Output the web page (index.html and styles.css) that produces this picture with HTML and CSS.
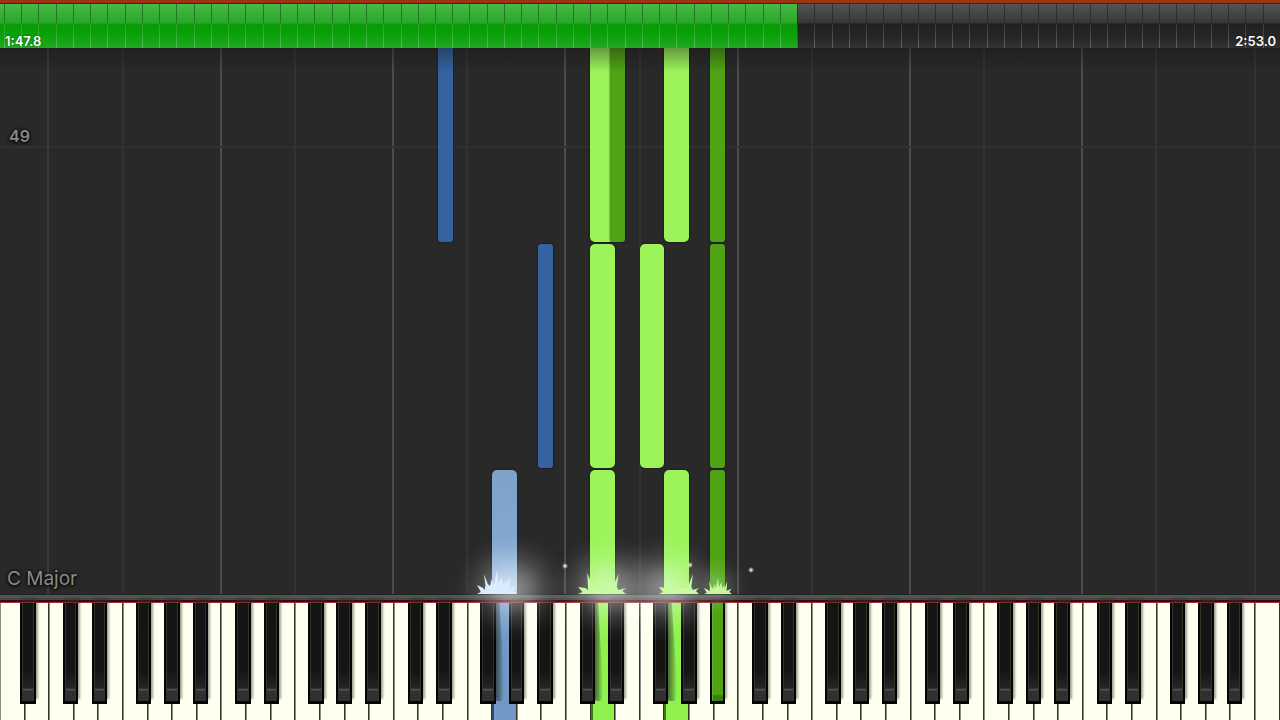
FILE: index.html
```html
<!DOCTYPE html>
<html lang="en">
<head>
<meta charset="utf-8">
<meta name="viewport" content="width=device-width, initial-scale=1">
<title>Piano roll</title>
<link rel="stylesheet" href="styles.css">
</head>
<body>
<main class="player">
  <div class="strip"></div>
  <section class="timeline" aria-label="Song position">
    <div class="elapsed"></div>
    <div class="ticks"></div>
    <div class="times"><span>1:47.8</span><span>2:53.0</span></div>
  </section>
  <section class="roll" aria-label="Falling notes">
    <div class="lines"></div>
    <div class="measure"><span class="measure-number">49</span></div>
    <div class="notes"></div>
    <div class="shade"></div>
    <div class="key-name">C Major</div>
  </section>
  <div class="ledge"></div>
  <section class="keyboard" aria-label="Keyboard">
    <div class="whites"></div>
    <div class="blacks"></div>
    <div class="effects"></div>
  </section>
</main>
<script src="piano.js"></script>
</body>
</html>
```

FILE: styles.css
```css
* {
  box-sizing: border-box;
}

body {
  margin: 0;
  background: #292929;
  font-family: Inter, "Liberation Sans", sans-serif;
}

.player {
  display: flex;
  flex-direction: column;
  height: 100vh;
  overflow: hidden;
}

.strip {
  height: 3px;
  flex: none;
  background: #9b3415;
}

/* Timeline */
.timeline {
  position: relative;
  display: flex;
  align-items: flex-end;
  flex: none;
  height: 45px;
  border-top: 1px solid #2a2a1a;
  background: linear-gradient(#555 0%, #363636 43%, #202020 45%, #252525 75%, #333 100%);
}

.elapsed {
  position: absolute;
  top: 0;
  bottom: 0;
  left: 0;
  width: 62.3%;
  background: linear-gradient(#48b848 0%, #28a828 43%, #0a9c0a 46%, #0aa00a 70%, #22a822 100%);
}

.ticks {
  position: absolute;
  inset: 0;
}

.tick {
  position: absolute;
  top: 0;
  bottom: 0;
  width: 1px;
  background: linear-gradient(rgba(0, 0, 0, 0.4) 0%, rgba(0, 0, 0, 0.25) 42%, rgba(255, 255, 255, 0.1) 46%, rgba(255, 255, 255, 0.25) 100%);
}

.times {
  position: relative;
  display: flex;
  justify-content: space-between;
  width: 100%;
  padding: 0 4px 0 5px;
  color: #fff;
  font-size: 13px;
  font-weight: 600;
  line-height: 14px;
  text-shadow: 0 0 2px rgba(0, 0, 0, 0.6);
}

/* Falling notes */
.roll {
  position: relative;
  flex: 1;
  min-height: 0;
  overflow: hidden;
  background: #292929;
}

.lines,
.notes {
  position: absolute;
  inset: 0;
}

.line {
  position: absolute;
  top: 0;
  bottom: 0;
  width: 2px;
  margin-left: -1px;
  background: #333;
}

.line.octave {
  background: #4c4c4c;
}

.line.edge {
  background: #3b3b3b;
}

.measure {
  position: absolute;
  top: 18%;
  left: 0;
  right: 0;
  height: 2px;
  background: #313131;
}

.measure-number {
  position: absolute;
  left: 9px;
  bottom: 2px;
  color: #868686;
  font-size: 16px;
  font-weight: 600;
  line-height: 20px;
  text-shadow: 0 0 4px #000, 0 1px 3px #000;
}

.note {
  position: absolute;
  width: 1.92%;
  border-radius: 5px;
  box-shadow: 0 0 2px rgba(0, 0, 0, 0.7);
}

.note.sharp {
  width: 1.17%;
  border-radius: 3px;
}

.note.open {
  border-top-left-radius: 0;
  border-top-right-radius: 0;
}

.note.landing {
  border-bottom-left-radius: 0;
  border-bottom-right-radius: 0;
}

.note.lime { background: #9cf45a; }
.note.green { background: #4fa314; }
.note.sky { background: linear-gradient(#7ea3c9 0%, #83a8cf 60%, #a8c6e8 100%); }
.note.blue { background: #3562a1; }

.shade {
  position: absolute;
  top: 0;
  left: 0;
  right: 0;
  height: 24px;
  background: linear-gradient(rgba(20, 20, 20, 0.4), rgba(20, 20, 20, 0));
}

.key-name {
  position: absolute;
  left: 7px;
  bottom: 3px;
  color: #8a8a8a;
  font-size: 19px;
  line-height: 24px;
  text-shadow: 0 0 4px #000, 0 1px 3px #000;
}

/* Ledge between the roll and the keys */
.ledge {
  flex: none;
  height: 9px;
  background: linear-gradient(#222 0 1px, #525454 1px 4px, #464848 4px 6px, #350b0e 6px 8px, #a52b35 8px 9px);
}

/* Keyboard */
.keyboard {
  position: relative;
  flex: none;
  height: 117px;
}

.whites {
  display: flex;
  height: 100%;
}

.white,
.black {
  margin: 0;
  padding: 0;
  border: 0;
  appearance: none;
}

.white {
  position: relative;
  flex: 1 1 0;
  min-width: 0;
  border-right: 1px solid #33332c;
  background: #fffff0;
  box-shadow: inset 1px 0 #8c8c80;
}

.white.sky {
  background: #7299c5;
  box-shadow: inset 2px 0 #314a68;
}

.white.lime {
  background: #90f04e;
  box-shadow: inset 2px 0 #3d7718;
}

.white.sky::before,
.white.lime::before {
  content: "";
  position: absolute;
  top: 0;
  left: 0;
  width: 52%;
  height: 98px;
  background: linear-gradient(to right, rgba(20, 40, 30, 0.4) 60%, rgba(20, 40, 30, 0));
  clip-path: polygon(0 0, 60% 0, 100% 80%, 100% 96%, 80% 100%, 0 100%);
}

.blacks {
  position: absolute;
  top: 0;
  left: 0;
  right: 0;
  height: 101px;
}

.black {
  position: absolute;
  top: 0;
  width: 1.21%;
  height: 100%;
  border: solid #050505;
  border-width: 0 2px 3px 2px;
  background: linear-gradient(#141414 0%, #151515 70%, #252525 87%, #555 88%, #303030 90%, #303030 100%);
  box-shadow: inset 1px 0 #33332c, inset -1px 0 #33332c, 2px -5px 2px rgba(50, 50, 40, 0.45);
}

.black.green {
  background: linear-gradient(#4fa314 0%, #4fa314 93%, #377b0c 95%, #3a8210 100%);
  box-shadow: inset 1px 0 #5fae25, 2px -5px 2px rgba(50, 50, 40, 0.4);
}

/* Light and sparks where notes strike the keys */
.effects {
  position: absolute;
  top: 0;
  left: 0;
  right: 0;
  height: 0;
  pointer-events: none;
}

.glow {
  position: absolute;
  top: -68px;
  width: 116px;
  height: 108px;
  margin-left: -58px;
  background: radial-gradient(closest-side, rgba(255, 255, 255, 0.5) 0%, rgba(255, 255, 255, 0.34) 28%, rgba(255, 255, 255, 0.14) 56%, rgba(255, 255, 255, 0.04) 80%, rgba(255, 255, 255, 0) 100%);
}

.glow.small {
  top: -49px;
  width: 64px;
  height: 64px;
  margin-left: -32px;
  opacity: 0.45;
}

.splash {
  position: absolute;
  top: -33px;
  width: 48px;
  height: 24px;
  margin-left: -24px;
}

.splash.medium {
  width: 40px;
  margin-left: -20px;
}

.splash.small {
  top: -25px;
  width: 28px;
  height: 16px;
  margin-left: -14px;
}

.spark {
  position: absolute;
  width: 6px;
  height: 6px;
  margin-left: -3px;
  background: radial-gradient(closest-side, #ddd 0 20%, rgba(255, 255, 255, 0) 100%);
}
```

FILE: piano.js
```js
const WHITE_KEYS = 52;
const SHARP_OFFSETS = { 0: 0.58, 1: 1.74, 3: 3.54, 4: 4.69, 5: 5.85 };
const pct = (keys) => (keys / WHITE_KEYS) * 100 + "%";

function add(parent, tag, className, style) {
  const el = document.createElement(tag);
  el.className = className;
  Object.assign(el.style, style);
  document.querySelector(parent).append(el);
  return el;
}

for (let i = 0; i < 74; i++) {
  add(".ticks", "span", "tick", { left: 0.31 + i * 1.347 + "%" });
}

for (let c = 2; c <= 51; c += 7) {
  const kind = c === 2 ? "edge" : c === 51 ? "" : "octave";
  add(".lines", "span", "line " + kind, { left: pct(c - 0.03) });
  if (c < 51) add(".lines", "span", "line", { left: pct(c + 2.98) });
}

// key position, colour, start and end as a share of the roll, extra classes
const notes = [
  [17.78, "blue sharp open", 0, 35.6],
  [21.84, "blue sharp", 35.9, 77],
  [19.99, "sky landing", 77.3, 100],
  [23.98, "lime open", 0, 35.6],
  [24.77, "green sharp open", 0, 35.6],
  [23.98, "lime", 35.9, 77],
  [23.98, "lime landing", 77.3, 100],
  [25.99, "lime", 35.9, 77],
  [26.99, "lime open", 0, 35.6],
  [26.99, "lime landing", 77.3, 100],
  [28.84, "green sharp open", 0, 35.6],
  [28.84, "green sharp", 35.9, 77],
  [28.84, "green sharp landing", 77.3, 100]
];
for (const [key, kind, start, end] of notes) {
  add(".notes", "div", "note " + kind, { left: pct(key), top: start + "%", height: end - start + "%" });
}

const names = ["C", "D", "E", "F", "G", "A", "B"];
const pressedWhite = { 20: "sky", 24: "lime", 27: "lime" };
for (let i = 0; i < WHITE_KEYS; i++) {
  const octave = Math.floor((i + 5) / 7);
  const key = add(".whites", "button", "white " + (pressedWhite[i] || ""), {});
  key.setAttribute("aria-label", names[(i + 5) % 7] + octave);
}
for (let octave = 0; octave < 8; octave++) {
  for (const [step, offset] of Object.entries(SHARP_OFFSETS)) {
    const left = octave * 7 - 5 + offset;
    if (left < 0 || left > 51) continue;
    const pressed = octave === 4 && step === "5" ? "green" : "";
    const key = add(".blacks", "button", "black " + pressed, { left: pct(left - 0.02) });
    key.setAttribute("aria-label", names[step] + " sharp " + octave);
  }
}

const GRASS = "M0 24 L5 22 L0 15 L8 18 L10 20 L11 15 L9 4 L14 14 L17 16 L19 9 L22 15 L26 0 L28 14 L32 6 L34 15 L38 10 L38 16 L43 5 L42 19 L51 16 L47 21 L52 24 Z";
const TUFT = "M0 24 L5 22 L0 17 L8 18 L11 20 L10 3 L16 16 L18 18 L37 18 L39 14 L44 4 L42 17 L44 20 L52 18 L48 21 L52 24 Z";
function splash(key, size, shape, colour) {
  const box = add(".effects", "div", "splash " + size, { left: pct(key) });
  box.innerHTML = `<svg width="100%" height="100%" viewBox="0 0 52 24" preserveAspectRatio="none" aria-hidden="true"><path d="${shape}" fill="${colour}"/></svg>`;
}
add(".effects", "i", "glow", { left: pct(20.8) });
add(".effects", "i", "glow", { left: pct(24.7) });
add(".effects", "i", "glow", { left: pct(27.1) });
add(".effects", "i", "glow small", { left: pct(29.15) });
splash(20.2, "medium", GRASS, "#dcecff");
splash(24.45, "", TUFT, "#c8fba0");
splash(27.6, "medium", TUFT, "#c8fba0");
splash(29.15, "small", GRASS, "#c6f79c");
add(".effects", "i", "spark", { left: pct(22.97), top: "-40px" });
add(".effects", "i", "spark", { left: pct(28.02), top: "-41px" });
add(".effects", "i", "spark", { left: pct(30.5), top: "-36px" });
```
